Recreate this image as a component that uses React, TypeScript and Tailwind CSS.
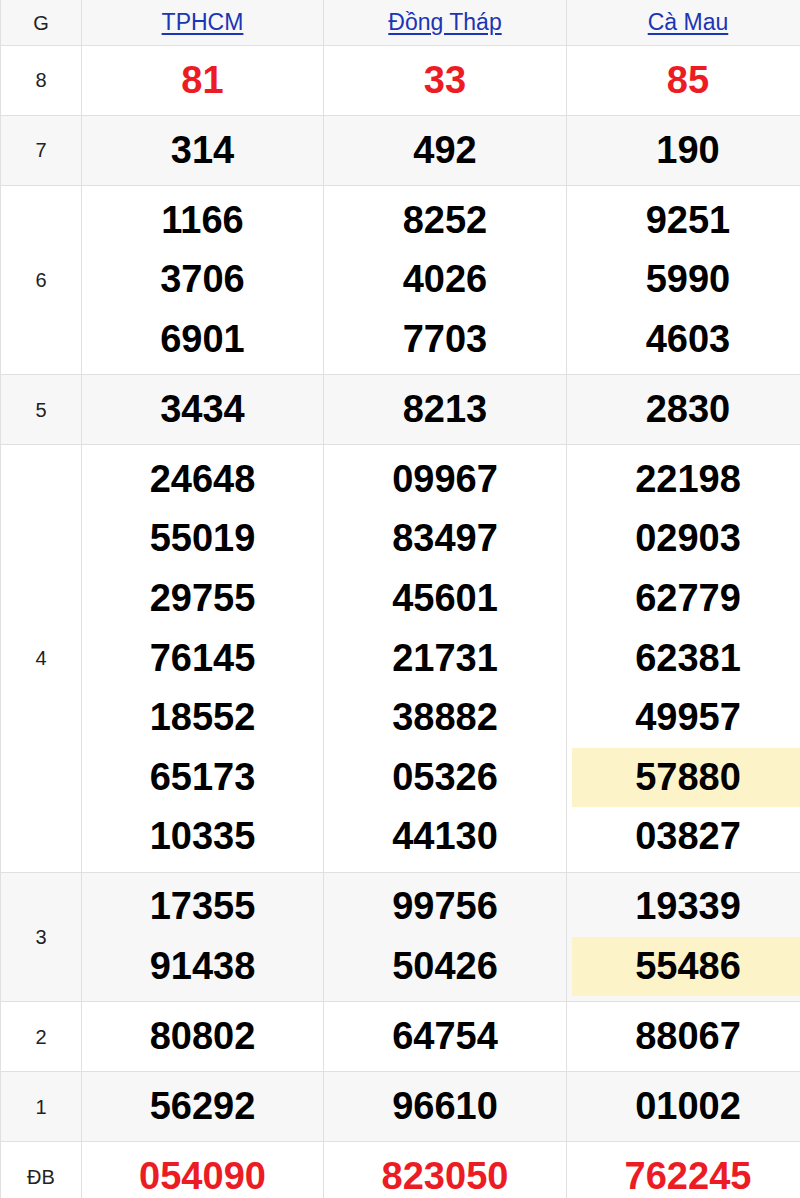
const provinces = ['TPHCM', 'Đồng Tháp', 'Cà Mau'];

type Prize = { label: string; values: string[][]; red?: boolean };

const prizes: Prize[] = [
  { label: '8', values: [['81'], ['33'], ['85']], red: true },
  { label: '7', values: [['314'], ['492'], ['190']] },
  { label: '6', values: [['1166', '3706', '6901'], ['8252', '4026', '7703'], ['9251', '5990', '4603']] },
  { label: '5', values: [['3434'], ['8213'], ['2830']] },
  {
    label: '4',
    values: [
      ['24648', '55019', '29755', '76145', '18552', '65173', '10335'],
      ['09967', '83497', '45601', '21731', '38882', '05326', '44130'],
      ['22198', '02903', '62779', '62381', '49957', '57880', '03827'],
    ],
  },
  { label: '3', values: [['17355', '91438'], ['99756', '50426'], ['19339', '55486']] },
  { label: '2', values: [['80802'], ['64754'], ['88067']] },
  { label: '1', values: [['56292'], ['96610'], ['01002']] },
  { label: 'ĐB', values: [['054090'], ['823050'], ['762245']], red: true },
];

const highlighted = ['57880', '55486'];

export default function App() {
  return (
    <div className="w-full overflow-hidden bg-white" style={{ fontFamily: '"Liberation Sans", Arial, sans-serif' }}>
      <div className="grid w-[810px] grid-cols-[82px_242px_243px_243px]">
        <div className="flex h-[46px] items-center justify-center border-b border-r border-l border-[#e0e0e0] bg-[#f7f7f7] text-[20px] text-[#222]">
          G
        </div>
        {provinces.map((p) => (
          <div key={p} className="flex h-[46px] items-center justify-center border-b border-r border-[#e0e0e0] bg-[#f7f7f7]">
            <a href="#" className="text-[23px] text-[#1c35b5] underline underline-offset-[3px]">
              {p}
            </a>
          </div>
        ))}

        {prizes.map((row, i) => {
          const bg = i % 2 === 1 ? 'bg-[#f7f7f7]' : 'bg-white';
          return (
            <div key={row.label} className="contents">
              <div className={`flex items-center justify-center border-b border-r border-l border-[#e0e0e0] text-[20px] text-[#222] ${bg}`}>
                {row.label}
              </div>
              {row.values.map((col, j) => (
                <div key={j} className={`border-b border-r border-[#e0e0e0] px-[5px] py-[4.7px] ${bg}`}>
                  {col.map((n) => (
                    <div
                      key={n}
                      className={`text-center text-[38px] font-bold leading-[59.6px] ${
                        row.red ? 'text-[#ec1c24]' : 'text-black'
                      } ${highlighted.includes(n) ? 'bg-[#fdf3c8]' : ''}`}
                    >
                      {n}
                    </div>
                  ))}
                </div>
              ))}
            </div>
          );
        })}
      </div>
    </div>
  );
}
